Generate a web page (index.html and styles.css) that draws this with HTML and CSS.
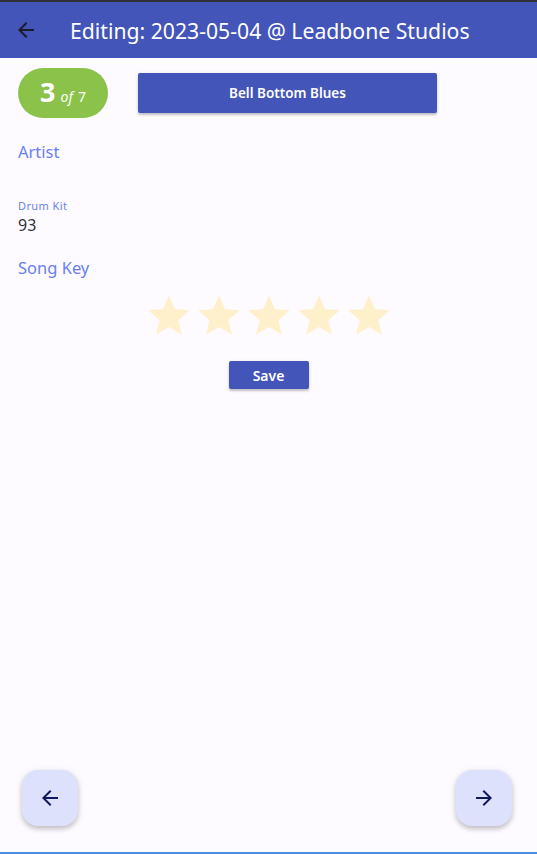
FILE: index.html
```html
<!DOCTYPE html>
<html>
<head>
<meta charset="utf-8">
<link rel="stylesheet" href="styles.css">
</head>
<body>
<div class="page">
  <div class="statusline"></div>
  <header class="appbar">
    <button class="iconbtn" aria-label="Back">
      <svg viewBox="0 0 24 24" width="24" height="24"><path d="M20 11H7.83l5.59-5.59L12 4l-8 8 8 8 1.41-1.41L7.83 13H20v-2z" fill="#1b1b2a"/></svg>
    </button>
    <h1 class="title">Editing: 2023-05-04 @ Leadbone Studios</h1>
  </header>
  <main class="content">
    <div class="toprow">
      <div class="badge"><span class="num">3</span><span class="of">of</span><span class="total">7</span></div>
      <button class="songbtn">Bell Bottom Blues</button>
    </div>
    <div class="field-label big artist">Artist</div>
    <div class="field">
      <div class="field-label small">Drum Kit</div>
      <div class="field-value">93</div>
    </div>
    <div class="field-label big songkey">Song Key</div>
    <div class="stars">
      <svg viewBox="0 0 24 24"><path d="M12 17.27L18.18 21l-1.64-7.03L22 9.24l-7.19-.61L12 2 9.19 8.63 2 9.24l5.46 4.73L5.82 21z"/></svg>
      <svg viewBox="0 0 24 24"><path d="M12 17.27L18.18 21l-1.64-7.03L22 9.24l-7.19-.61L12 2 9.19 8.63 2 9.24l5.46 4.73L5.82 21z"/></svg>
      <svg viewBox="0 0 24 24"><path d="M12 17.27L18.18 21l-1.64-7.03L22 9.24l-7.19-.61L12 2 9.19 8.63 2 9.24l5.46 4.73L5.82 21z"/></svg>
      <svg viewBox="0 0 24 24"><path d="M12 17.27L18.18 21l-1.64-7.03L22 9.24l-7.19-.61L12 2 9.19 8.63 2 9.24l5.46 4.73L5.82 21z"/></svg>
      <svg viewBox="0 0 24 24"><path d="M12 17.27L18.18 21l-1.64-7.03L22 9.24l-7.19-.61L12 2 9.19 8.63 2 9.24l5.46 4.73L5.82 21z"/></svg>
    </div>
    <div class="saverow"><button class="savebtn">Save</button></div>
  </main>
  <footer class="fabs">
    <button class="fab" aria-label="Previous">
      <svg viewBox="0 0 24 24" width="24" height="24"><path d="M20 11H7.83l5.59-5.59L12 4l-8 8 8 8 1.41-1.41L7.83 13H20v-2z" fill="#0f1a5c"/></svg>
    </button>
    <button class="fab" aria-label="Next">
      <svg viewBox="0 0 24 24" width="24" height="24"><path d="M12 4l-1.41 1.41L16.17 11H4v2h12.17l-5.58 5.59L12 20l8-8z" fill="#0f1a5c"/></svg>
    </button>
  </footer>
  <div class="bottomline"></div>
</div>
</body>
</html>
```
FILE: styles.css
```css
* { box-sizing: border-box; }
html, body { margin: 0; padding: 0; }
body {
  background: #fdfbff;
  font-family: "Noto Sans", "DejaVu Sans", sans-serif;
  width: 537px;
  height: 854px;
  overflow: hidden;
}
.page {
  display: flex;
  flex-direction: column;
  height: 854px;
}
.statusline {
  height: 2px;
  background: #2e2f38;
  flex: none;
}
.appbar {
  height: 56px;
  flex: none;
  background: #4355b9;
  display: flex;
  align-items: center;
  padding-left: 14px;
}
.iconbtn {
  width: 24px;
  height: 24px;
  padding: 0;
  border: 0;
  background: none;
  display: flex;
}
.title {
  margin: 0 0 0 32px;
  color: #ffffff;
  font-size: 21.2px;
  font-weight: 400;
  white-space: nowrap;
}
.content {
  flex: 1;
  padding: 10px 18px 0 18px;
  display: flex;
  flex-direction: column;
}
.toprow {
  display: flex;
  align-items: flex-start;
  gap: 30px;
}
.badge {
  width: 90px;
  height: 50px;
  border-radius: 25px;
  background: #8bc34a;
  color: #fff;
  display: flex;
  align-items: baseline;
  justify-content: center;
  padding-top: 6px;
}
.badge .num {
  font-size: 27px;
  font-weight: 700;
  line-height: 36px;
}
.badge .of {
  font-size: 14px;
  font-style: italic;
  margin-left: 5px;
}
.badge .total {
  font-size: 14px;
  margin-left: 5px;
}
.songbtn {
  margin-top: 5px;
  width: 299px;
  height: 40px;
  border: 0;
  border-radius: 2px;
  background: #4355b9;
  color: #fff;
  font-family: inherit;
  font-size: 13.5px;
  font-weight: 600;
  box-shadow: 0 2px 2px rgba(0,0,0,0.18), 0 1px 4px rgba(0,0,0,0.1);
}
.field-label {
  color: #6b7ff2;
}
.field-label.big {
  font-size: 16.5px;
  line-height: 24px;
}
.artist { margin-top: 22px; }
.field { margin-top: 35px; }
.field-label.small {
  font-size: 11px;
  line-height: 14px;
  letter-spacing: 0.4px;
}
.field-value {
  font-size: 16px;
  line-height: 22px;
  margin-top: 1px;
  color: #333333;
}
.songkey { margin-top: 20px; }
.stars {
  margin-top: 11px;
  display: flex;
  justify-content: center;
  padding-left: 0;
}
.stars svg {
  width: 50px;
  height: 50px;
  fill: #fff0cc;
}
.saverow {
  display: flex;
  justify-content: center;
  margin-top: 20px;
  padding-left: 0;
}
.savebtn {
  width: 80px;
  height: 28px;
  border: 0;
  border-radius: 2px;
  background: #4355b9;
  color: #fff;
  font-family: inherit;
  font-size: 14px;
  font-weight: 600;
  box-shadow: 0 2px 2px rgba(0,0,0,0.18), 0 1px 4px rgba(0,0,0,0.1);
}
.fabs {
  flex: none;
  display: flex;
  justify-content: space-between;
  padding: 0 25px 26px 22px;
}
.fab {
  width: 56px;
  height: 56px;
  border: 0;
  border-radius: 16px;
  background: #dde1fc;
  display: flex;
  align-items: center;
  justify-content: center;
  padding: 0;
  box-shadow: 0 3px 5px rgba(0,0,0,0.2), 0 1px 8px rgba(0,0,0,0.08);
}
.bottomline {
  flex: none;
  height: 2px;
  background: #4a90e2;
}
```
